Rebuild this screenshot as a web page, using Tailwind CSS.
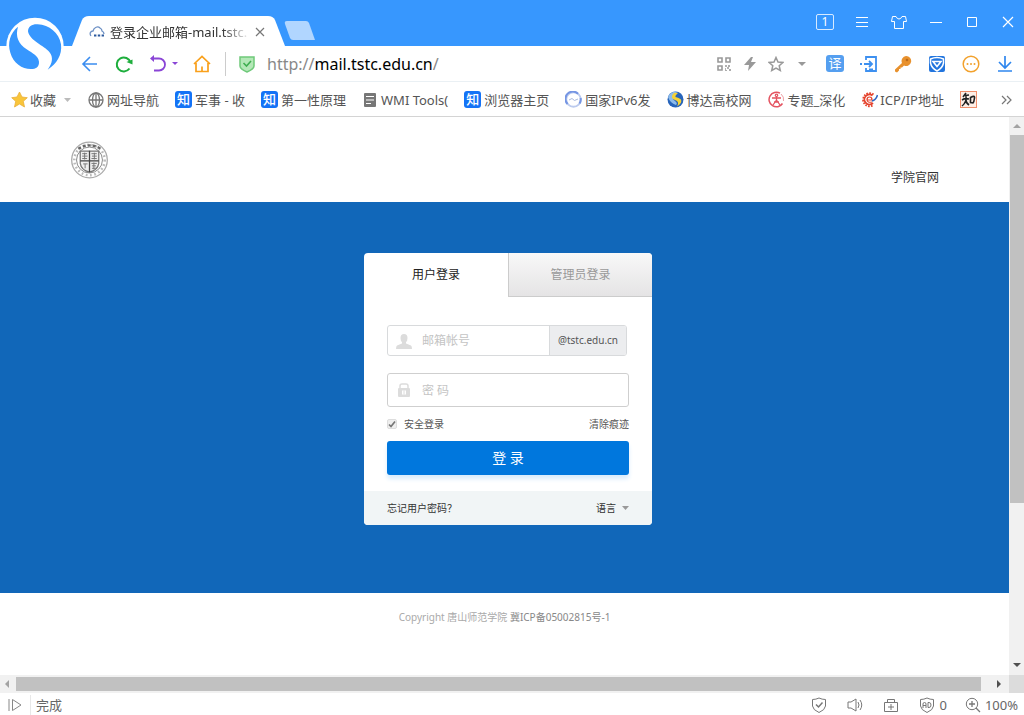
<!DOCTYPE html>
<html lang="zh-CN">
<head>
    <meta charset="UTF-8">
    <meta name="viewport" content="width=device-width, initial-scale=1.0">
    <title>登录企业邮箱-mail.tstc.edu.cn</title>
    <script src="https://cdn.jsdelivr.net/npm/@tailwindcss/browser@4"></script>
</head>
<body class="relative flex h-screen flex-col overflow-hidden bg-white font-['Noto_Sans','Noto_Sans_CJK_SC',sans-serif] text-[13px] leading-5 text-[#555]">

    <!-- Browser logo -->
    <svg class="absolute left-0 top-[10px] z-10 h-[70px] w-[90px]" viewBox="0 0 270 210" aria-hidden="true">
        <circle cx="105" cy="109" r="86" fill="#fff"/>
        <path d="M54 50C30 70 22 98 31 128C41 163 74 182 103 176C113 173 118 165 117 155C115 138 98 130 80 118C56 102 45 80 54 50Z" fill="#3797fe"/>
        <path d="M84 64C84 49 97 42 113 43C148 45 177 68 183 103C187 135 170 162 143 179C157 160 161 142 148 126C134 108 88 92 84 64Z" fill="#3797fe"/>
    </svg>

    <!-- Title bar -->
    <header class="flex h-[46px] shrink-0 items-end bg-[#3797fe] pl-[72px]">
        <div class="relative flex h-[31px] w-[214px] items-center pl-[17px] pt-[2px]">
            <svg class="absolute inset-0 h-full w-full" viewBox="0 0 214 31" preserveAspectRatio="none" aria-hidden="true">
                <path d="M0 31L10 5Q12 1 17 1H196Q201 1 203 5L213 31Z" fill="#fff"/>
            </svg>
            <svg class="relative h-4 w-4 shrink-0" viewBox="0 0 16 16" fill="none" stroke="#6b8fc4" stroke-width="1.3" aria-hidden="true">
                <path d="M2 12C0 9 2 7 4 7C5 3 9 2 11 4C13 5 13 7 13 7C15 8 15 9 15 10"/>
                <path d="M5 11.500H15" stroke="#2d5a9e" stroke-width="2" stroke-dasharray="2.400 1.400"/>
            </svg>
            <span class="relative ml-[5px] w-[140px] whitespace-nowrap text-[#333] mask-r-from-80% mask-r-to-100%">登录企业邮箱-mail.tstc.</span>
            <button class="relative ml-[5px]" aria-label="关闭标签">
                <svg class="h-[10px] w-[10px]" viewBox="0 0 10 10" stroke="#777" stroke-width="1.200"><path d="M1 1L9 9M9 1L1 9"/></svg>
            </button>
        </div>
        <button class="mb-[6px] -ml-[2px]" aria-label="新标签">
            <svg class="h-[19px] w-8" viewBox="0 0 32 19"><path d="M3 0H22Q24 0 25 2L31 19H9Q7 19 6 17L1 3Q0 0 3 0Z" fill="#b1d6ff"/></svg>
        </button>
        <div class="mb-4 ml-auto flex items-center gap-5 pr-2 text-white">
            <button class="flex h-4 w-[18px] items-center justify-center rounded-[2px] border border-white/80 text-xs leading-3">1</button>
            <button aria-label="菜单"><svg class="h-4 w-4" viewBox="0 0 16 16" stroke="currentColor"><path d="M2 3.500H14M2 8.500H14M2 12.500H14"/></svg></button>
            <button aria-label="皮肤"><svg class="h-4 w-[18px]" viewBox="0 0 18 16" fill="none" stroke="currentColor"><path d="M6 2.500L2.500 2.500L1.500 7.500H4.500V14.500H13.500V7.500H16.500L15.500 2.500H12Q11 5 9 5Q7 5 6 2.500Z"/></svg></button>
            <button aria-label="最小化"><svg class="h-4 w-4" viewBox="0 0 16 16" stroke="currentColor"><path d="M2 8.500H14"/></svg></button>
            <button aria-label="最大化"><svg class="h-4 w-4" viewBox="0 0 16 16" fill="none" stroke="currentColor"><path d="M3.500 3.500H12.500V12.500H3.500Z"/></svg></button>
            <button aria-label="关闭"><svg class="h-4 w-4" viewBox="0 0 16 16" stroke="currentColor" stroke-width="1.200"><path d="M3 3L13 13M13 3L3 13"/></svg></button>
        </div>
    </header>

    <!-- Address bar -->
    <nav class="flex h-9 shrink-0 items-center border-b border-[#eaf0f4] pl-[81px] pr-[10px]">
        <button aria-label="后退"><svg class="h-[18px] w-[18px]" viewBox="0 0 18 18" fill="none" stroke="#3b8df0" stroke-width="1.600"><path d="M16 9H2M9 2L2 9L9 16"/></svg></button>
        <button class="ml-4" aria-label="刷新"><svg class="h-[18px] w-[18px]" viewBox="0 0 18 18" fill="none" stroke="#1eae3d" stroke-width="2"><path d="M14.500 13.500A7 7 0 1 1 15.500 7.500"/><path d="M11.500 7L17.500 4.500V9.500Z" fill="#1eae3d" stroke="none"/></svg></button>
        <button class="ml-4" aria-label="撤销"><svg class="h-[18px] w-[18px]" viewBox="0 0 18 18" fill="none" stroke="#8a45d6" stroke-width="1.800"><path d="M4 3.500H10A6 6 0 0 1 10 15.500H5"/><path d="M5 0V7L1 3.500Z" fill="#8a45d6" stroke="none"/></svg></button>
        <svg class="ml-[5px] h-[3px] w-[6px]" viewBox="0 0 6 3" fill="#8a45d6" aria-hidden="true"><path d="M0 0H6L3 3Z"/></svg>
        <button class="ml-[15px]" aria-label="主页"><svg class="h-[18px] w-[18px]" viewBox="0 0 18 18" fill="none" stroke="#f9a01b" stroke-width="1.700"><path d="M1 9L9 1.500L17 9M3 8V16.500H15V8M9 16V11.500"/></svg></button>
        <span class="mx-[14px] mr-3 h-6 w-px bg-[#ccc]"></span>
        <svg class="h-[18px] w-[18px] shrink-0" viewBox="0 0 18 18" aria-hidden="true"><path d="M2 2H16V11Q16 14 9 17Q2 14 2 11Z" fill="#b4e8b7" stroke="#6fc97a" stroke-width="1.500"/><path d="M5.500 8L8.500 11L13 6" fill="none" stroke="#3fae50" stroke-width="1.600"/></svg>
        <div class="relative ml-[11px] min-w-0 flex-1 text-base leading-6">
            <input class="w-full text-transparent caret-black outline-none" type="text" aria-label="地址" autocomplete="off">
            <span class="pointer-events-none absolute inset-0 text-[#888]">http://<span class="text-black">mail.tstc.edu.cn</span>/</span>
        </div>
        <div class="flex items-center gap-[10px] text-[#999]">
            <button aria-label="二维码"><svg class="h-4 w-4" viewBox="0 0 16 16" fill="none" stroke="currentColor" stroke-width="1.600"><path d="M2 2H6V6H2ZM10 2H14V6H10ZM2 10H6V14H2ZM9 10H11M13 9V11M11 12H13M10 14V15M14 13V15M9 13H10"/></svg></button>
            <button aria-label="极速模式"><svg class="h-4 w-4" viewBox="0 0 16 16" fill="currentColor"><path d="M9 1L2 9H7L6 15L14 6H9L11 1Z"/></svg></button>
            <button aria-label="收藏"><svg class="h-4 w-4" viewBox="0 0 16 16" fill="none" stroke="currentColor" stroke-width="1.500"><path d="M8 1.500L10 6L14.800 6.500L11.200 9.700L12.300 14.500L8 12L3.700 14.500L4.800 9.700L1.200 6.500L6 6Z"/></svg></button>
            <button class="ml-1" aria-label="更多地址"><svg class="h-1 w-2" viewBox="0 0 8 4" fill="currentColor"><path d="M0 0H8L4 4Z"/></svg></button>
        </div>
        <div class="ml-5 flex items-center gap-4">
            <button class="h-[17px] w-[18px] rounded-[3px] bg-[#559ff0] text-[13px] leading-[15px] text-white">译</button>
            <button aria-label="登录"><svg class="h-[18px] w-[18px]" viewBox="0 0 18 18" fill="none" stroke="#3d90f0" stroke-width="1.800"><path d="M6 5V2H16V16H6V13M9 14.500H13"/><path d="M0 9H2M4 9H12M9 6L12 9L9 12"/></svg></button>
            <button aria-label="密码"><svg class="h-[18px] w-[18px]" viewBox="0 0 18 18"><path d="M12 1A5 5 0 1 1 10 10.500L8 12.500H6.500V14H5V15.500L3 17.500L1 16.500V14.500L8 8A5 5 0 0 1 12 1Z" fill="#e8912d"/><circle cx="13" cy="5" r="1.300" fill="#b96a1c"/></svg></button>
            <button aria-label="安全"><svg class="h-[18px] w-[18px]" viewBox="0 0 18 18"><rect x="1" y="1" width="16" height="16" rx="2" fill="#2275de"/><path d="M2.500 4Q9 1 15.500 4V8Q14.500 13 9 16Q3.500 13 2.500 8Z" fill="none" stroke="#fff" stroke-width="1.500"/><path d="M5 6.500H13L9 11.500Z" fill="none" stroke="#fff" stroke-width="1.600"/></svg></button>
            <button aria-label="更多"><svg class="h-[18px] w-[18px]" viewBox="0 0 18 18"><circle cx="9" cy="9" r="7.800" fill="none" stroke="#f2a12c" stroke-width="1.500"/><g fill="#f2a12c"><circle cx="5.500" cy="9" r="1"/><circle cx="9" cy="9" r="1"/><circle cx="12.500" cy="9" r="1"/></g></svg></button>
            <button aria-label="下载"><svg class="h-[18px] w-[18px]" viewBox="0 0 18 18" fill="none" stroke="#2f87ee" stroke-width="1.700"><path d="M9 1V13M3 7L9 13L15 7M2 16H16"/></svg></button>
        </div>
    </nav>

    <!-- Bookmarks -->
    <nav class="flex h-[35px] shrink-0 items-center gap-4 overflow-hidden whitespace-nowrap border-b border-[#d4d4d4] pl-[11px] pr-3 pt-px">
        <button class="flex items-center gap-[2px]">
            <svg class="h-[17px] w-[17px]" viewBox="0 0 17 17"><path d="M8.500 1L11 6L16.300 6.700L12.300 10.300L13.500 16L8.500 13L3.500 16L4.700 10.300L0.700 6.700L6 6Z" fill="#f9c53a" stroke="#e9ae3a" stroke-width=".8"/></svg>
            收藏
            <svg class="ml-[6px] mr-px h-1 w-[7px]" viewBox="0 0 7 4" fill="#bbb"><path d="M0 0H7L3.500 4Z"/></svg>
        </button>
        <a href="#" class="flex items-center gap-[3px]">
            <svg class="h-4 w-4" viewBox="0 0 16 16" fill="none" stroke="#777" stroke-width="1.300"><circle cx="8" cy="8" r="7"/><ellipse cx="8" cy="8" rx="3.500" ry="7"/><path d="M8 1V15M1 8H15"/></svg>
            网址导航
        </a>
        <a href="#" class="flex items-center gap-[3px]">
            <span class="h-[17px] w-[17px] rounded-[3px] bg-[#1473f6] text-center text-[13px] font-medium leading-4 text-white">知</span>
            军事 - 收
        </a>
        <a href="#" class="flex items-center gap-[3px]">
            <span class="h-[17px] w-[17px] rounded-[3px] bg-[#1473f6] text-center text-[13px] font-medium leading-4 text-white">知</span>
            第一性原理
        </a>
        <a href="#" class="flex items-center gap-[3px]">
            <svg class="h-4 w-4" viewBox="0 0 16 16"><rect x="2" y="1" width="12" height="14" rx="1" fill="#777"/><path d="M4 4.500H12M4 8H12M4 11.500H9" stroke="#fff" stroke-width="1.200"/></svg>
            WMI Tools(
        </a>
        <a href="#" class="flex items-center gap-[3px]">
            <span class="h-[17px] w-[17px] rounded-[3px] bg-[#1473f6] text-center text-[13px] font-medium leading-4 text-white">知</span>
            浏览器主页
        </a>
        <a href="#" class="flex items-center gap-[3px]">
            <svg class="h-[17px] w-[17px]" viewBox="0 0 17 17" fill="none"><circle cx="8.500" cy="8.500" r="7.300" stroke="#bccbee" stroke-width="2"/><path d="M2.500 13A7.300 7.300 0 0 1 13 2.800M14.500 12.500A7.300 7.300 0 0 0 15.600 7" stroke="#7595e3" stroke-width="2"/><path d="M4 9L7 7.500L9.500 9.500L13 8" stroke="#a9b9dd"/></svg>
            国家IPv6发
        </a>
        <a href="#" class="flex items-center gap-[3px]">
            <svg class="h-[17px] w-[17px]" viewBox="0 0 17 17"><circle cx="8.500" cy="8.500" r="8" fill="#2764bb"/><path d="M1 6A8 8 0 0 1 11 1Q7 2 6 5Q5 8 8 10Q11 12 9 14Q3 12 1 6Z" fill="#8dbbea"/><path d="M6 3Q3 7 8 9Q13 10.500 10 15.500Q15.500 12 14 8.500Q12 6.500 8.500 6Q8 4 11 2.500Q8 1 6 3Z" fill="#f4d237"/></svg>
            博达高校网
        </a>
        <a href="#" class="flex items-center gap-[3px]">
            <svg class="h-[17px] w-[17px]" viewBox="0 0 17 17" fill="none" stroke="#e45461"><path d="M12 2.200A7.300 7.300 0 1 0 14.500 12.500" stroke-width="1.500"/><path d="M13 3A7.300 7.300 0 0 1 15.500 10" stroke="#efa0a5"/><circle cx="8.500" cy="4.300" r="1.200" stroke-width="1.200"/><path d="M4 7H13M8.500 6V9L5 14M8.500 9L12 14M6 11H11" stroke-width="1.300"/></svg>
            专题_深化
        </a>
        <a href="#" class="flex items-center gap-[2px]">
            <svg class="h-[17px] w-[17px]" viewBox="0 0 17 17" fill="none"><path d="M12.500 3.500A6.500 6.500 0 1 0 12.500 14" stroke="#e5432d" stroke-width="2" stroke-dasharray="1.600 1.200"/><path d="M11.500 4.500A5 5 0 1 0 12 12" stroke="#e5432d" stroke-width="1.800"/><path d="M6 9H11Q11 6 8.500 6Q6 6 6 9Q6.500 12 11 11" stroke="#e5432d" stroke-width="1.200"/><path d="M11 10Q15 9 16.500 4" stroke="#2b66c4" stroke-width="1.500"/></svg>
            ICP/IP地址
        </a>
        <a href="#" aria-label="知" class="h-[17px] w-[17px] shrink-0 border border-[#f08f6c] bg-[#fdeee6]">
            <svg class="h-[15px] w-[15px]" viewBox="0 0 15 15" fill="none" stroke="#222" stroke-width="1.600"><path d="M5 1L2 5M4 3.500L8 3M1 8Q4 6 8 7M5 4Q6 10 1 14M5 8Q5 11 8 13"/><path d="M9.500 5.500Q14 3 13.500 6Q13 10 12 11L9.500 10.500Z"/></svg>
        </a>
        <button class="ml-auto" aria-label="更多书签"><svg class="h-[10px] w-[11px]" viewBox="0 0 11 10" fill="none" stroke="#777" stroke-width="1.200"><path d="M1 1L5 5L1 9M6 1L10 5L6 9"/></svg></button>
    </nav>

    <!-- Page viewport -->
    <div class="flex min-h-0 flex-1">
        <main class="flex min-w-0 flex-1 flex-col overflow-hidden text-xs">
            <div class="h-[85px] shrink-0">
                <div class="mx-auto flex max-w-[869px] items-start justify-between">
                    <svg class="mt-6 h-[38px] w-[39px]" viewBox="0 0 39 39" fill="none" stroke="#777" role="img" aria-label="学院校徽">
                        <circle cx="19.500" cy="19.500" r="18.300" stroke="#aaa" stroke-width="1.300"/>
                        <circle cx="19.500" cy="19.500" r="15.600" stroke="#bbb" stroke-width="2.600" stroke-dasharray="1.800 2.600"/>
                        <path d="M8 8Q19.500 1 31 8" stroke="#666" stroke-width="2.500" stroke-dasharray="3 2.200"/>
                        <circle cx="19.500" cy="19.500" r="13.300" stroke="#888"/>
                        <path d="M10 10.500H29V23Q28 30 19.500 32Q11 30 10 23Z" fill="#eee" stroke-width="1.300"/>
                        <path d="M19.500 10V32M10 20.500H29" stroke="#444" stroke-width="1.300"/>
                        <path d="M12 13H17M12 15.500H17.500M12 18H17M14.500 12V19M21.500 13H27M22 15.500H27M21.500 18H27M24.500 12V19M13 23.500H17.500M15 23.500V28M21.500 23H27M22 25.500H26M24 22V29M22 28H26"/>
                    </svg>
                    <a href="#" class="mt-[53px] leading-4 text-[#333]">学院官网</a>
                </div>
            </div>

            <section class="h-[391px] shrink-0 bg-[#1167b9] pl-[7px] pt-[51px]">
                <form class="mx-auto w-full max-w-[288px] overflow-hidden rounded bg-white" onsubmit="return false">
                    <div class="grid h-11 grid-cols-2">
                        <button type="button" class="text-[#222]">用户登录</button>
                        <button type="button" class="border-b border-l border-[#ccc] bg-linear-to-b from-[#f8f8f8] to-[#e5e4e5] text-[#999]">管理员登录</button>
                    </div>
                    <div class="px-[23px] pt-7">
                        <div class="mr-[2px] flex h-[31px] items-center rounded-[3px] border border-[#d8dadc]">
                            <label for="account" class="pl-2">
                                <svg class="h-4 w-4" viewBox="0 0 16 16" fill="#dcdcdc"><path d="M8 1Q11.500 1 11.500 5Q11.500 8 10 9V10.500L15 12.500Q16 13 16 16H0Q0 13 1 12.500L6 10.500V9Q4.500 8 4.500 5Q4.500 1 8 1Z"/></svg>
                            </label>
                            <input id="account" type="text" aria-label="邮箱帐号" placeholder="邮箱帐号" class="ml-[10px] h-6 min-w-0 flex-1 outline-none placeholder:text-[#c4c4c4]">
                            <span class="flex h-full w-[77px] items-center justify-center rounded-r-[2px] border-l border-[#d8dadc] bg-[#ecedef] text-[10px] text-[#555]">@tstc.edu.cn</span>
                        </div>
                        <div class="mt-[17px] flex h-[34px] items-center rounded-[3px] border border-[#cfcfcf]">
                            <label for="password" class="pl-2">
                                <svg class="h-4 w-4" viewBox="0 0 16 16"><path d="M4 7V4Q4 2 6 2H10Q12 2 12 4V7" fill="none" stroke="#dcdcdc" stroke-width="1.500"/><rect x="2" y="6" width="12" height="9" rx="1" fill="#dcdcdc"/><path d="M6 8.500H10V12.500H6Z" fill="#fff"/><path d="M8 8.500V12.500" stroke="#dcdcdc"/></svg>
                            </label>
                            <input id="password" type="password" aria-label="密码" placeholder="密 码" class="ml-[10px] h-6 min-w-0 flex-1 outline-none placeholder:text-[#c4c4c4]">
                        </div>
                        <div class="flex h-[34px] items-center justify-between pt-px text-[10px]">
                            <label class="flex items-center gap-[7px]">
                                <span class="relative h-[10px] w-[10px]">
                                    <input type="checkbox" checked class="peer block h-[10px] w-[10px] appearance-none rounded-[2px] border border-[#ddd] bg-[#eee]">
                                    <svg class="pointer-events-none absolute inset-0 hidden h-[10px] w-[10px] peer-checked:block" viewBox="0 0 10 10" fill="none" stroke="#777" stroke-width="1.700"><path d="M2 5.500L4 7.500L8 2.500"/></svg>
                                </span>
                                安全登录
                            </label>
                            <a href="#" class="text-[#555]">清除痕迹</a>
                        </div>
                        <button class="block h-[34px] w-full rounded-[3px] bg-[#0077dd] text-sm text-white shadow-[0_4px_4px_#d9ecfc]">登 录</button>
                    </div>
                    <div class="mt-4 flex h-[34px] items-center justify-between bg-[#f1f5f6] px-[23px] pt-px text-[10px] text-[#333]">
                        <a href="#">忘记用户密码？</a>
                        <button type="button" class="flex items-center gap-[6px]">语言 <svg class="h-1 w-[7px]" viewBox="0 0 7 4" fill="#999"><path d="M0 0H7L3.500 4Z"/></svg></button>
                    </div>
                </form>
            </section>

            <footer class="pt-[18px] text-center text-[10px] text-[#aaa]">Copyright 唐山师范学院 <a href="#" class="text-[#888]">冀ICP备05002815号-1</a></footer>
        </main>

        <!-- Vertical scrollbar -->
        <div class="flex w-[15px] shrink-0 flex-col items-center bg-[#f1f1f1]">
            <svg class="my-[7px] h-1 w-2 shrink-0" viewBox="0 0 8 4" fill="#a3a3a3"><path d="M0 4H8L4 0Z"/></svg>
            <div class="ml-px h-[66%] w-[14px] bg-[#c1c1c1]"></div>
            <svg class="mb-2 mt-auto h-1 w-2 shrink-0" viewBox="0 0 8 4" fill="#505050"><path d="M0 0H8L4 4Z"/></svg>
        </div>
    </div>

    <!-- Horizontal scrollbar -->
    <div class="flex h-[18px] shrink-0 items-center bg-[#f1f1f1]">
        <svg class="ml-[5px] mr-[7px] h-2 w-1" viewBox="0 0 4 8" fill="#a3a3a3"><path d="M4 0V8L0 4Z"/></svg>
        <div class="h-[14px] flex-1 bg-[#c1c1c1]"></div>
        <svg class="ml-4 mr-2 h-2 w-1" viewBox="0 0 4 8" fill="#505050"><path d="M0 0V8L4 4Z"/></svg>
        <div class="h-full w-[15px] bg-[#dcdcdc]"></div>
    </div>

    <!-- Status bar -->
    <footer class="flex h-[22px] shrink-0 items-center pl-2 pr-[6px] pt-px text-[#666]">
        <svg class="h-[14px] w-[14px]" viewBox="0 0 14 14" fill="none" stroke="#888" aria-hidden="true"><path d="M1 1V13M4.500 1.500V12.500L13 7Z"/></svg>
        <span class="ml-2 h-5 w-px bg-[#e8e8e8]"></span>
        <span class="ml-[5px]">完成</span>
        <div class="ml-auto flex items-center">
            <button aria-label="安全"><svg class="h-4 w-4" viewBox="0 0 16 16" fill="none" stroke="#777"><path d="M8 1Q11 2.500 14.500 2.500V9Q14 13 8 15.500Q2 13 1.500 9V2.500Q5 2.500 8 1Z"/><path d="M5 7.500L7.500 10L11.500 5.500" stroke-width="1.500"/></svg></button>
            <button class="ml-5" aria-label="声音"><svg class="h-4 w-4" viewBox="0 0 16 16" fill="none" stroke="#777"><path d="M1 5H4L9 2V14L4 11H1ZM11 5Q13 8 11 11M13 3Q16.500 8 13 13"/></svg></button>
            <button class="ml-5" aria-label="工具箱"><svg class="h-4 w-4" viewBox="0 0 16 16" fill="none" stroke="#777"><path d="M1.500 5.500H14.500V14.500H1.500ZM4.500 5V2.500H11.500V5M8 7V13M5 10H11"/></svg></button>
            <button class="ml-5 flex items-center gap-1"><svg class="h-4 w-4" viewBox="0 0 16 16" fill="none" stroke="#777"><path d="M8 1Q11 2.500 14.500 2.500V9Q14 13 8 15.500Q2 13 1.500 9V2.500Q5 2.500 8 1Z"/><path d="M4 11V7Q4 5.500 5.500 5.500Q7 5.500 7 7V11M4 8.500H7M9 5.500V10.500H10Q12 10.500 12 8Q12 5.500 10 5.500Z"/></svg>0</button>
            <button class="ml-[18px] flex items-center gap-1"><svg class="h-4 w-4" viewBox="0 0 16 16" fill="none" stroke="#777"><circle cx="7" cy="7" r="5.700"/><path d="M11 11L15 15M4 7H10M7 4V10" stroke-width="1.300"/></svg>100%</button>
        </div>
    </footer>

</body>
</html>
